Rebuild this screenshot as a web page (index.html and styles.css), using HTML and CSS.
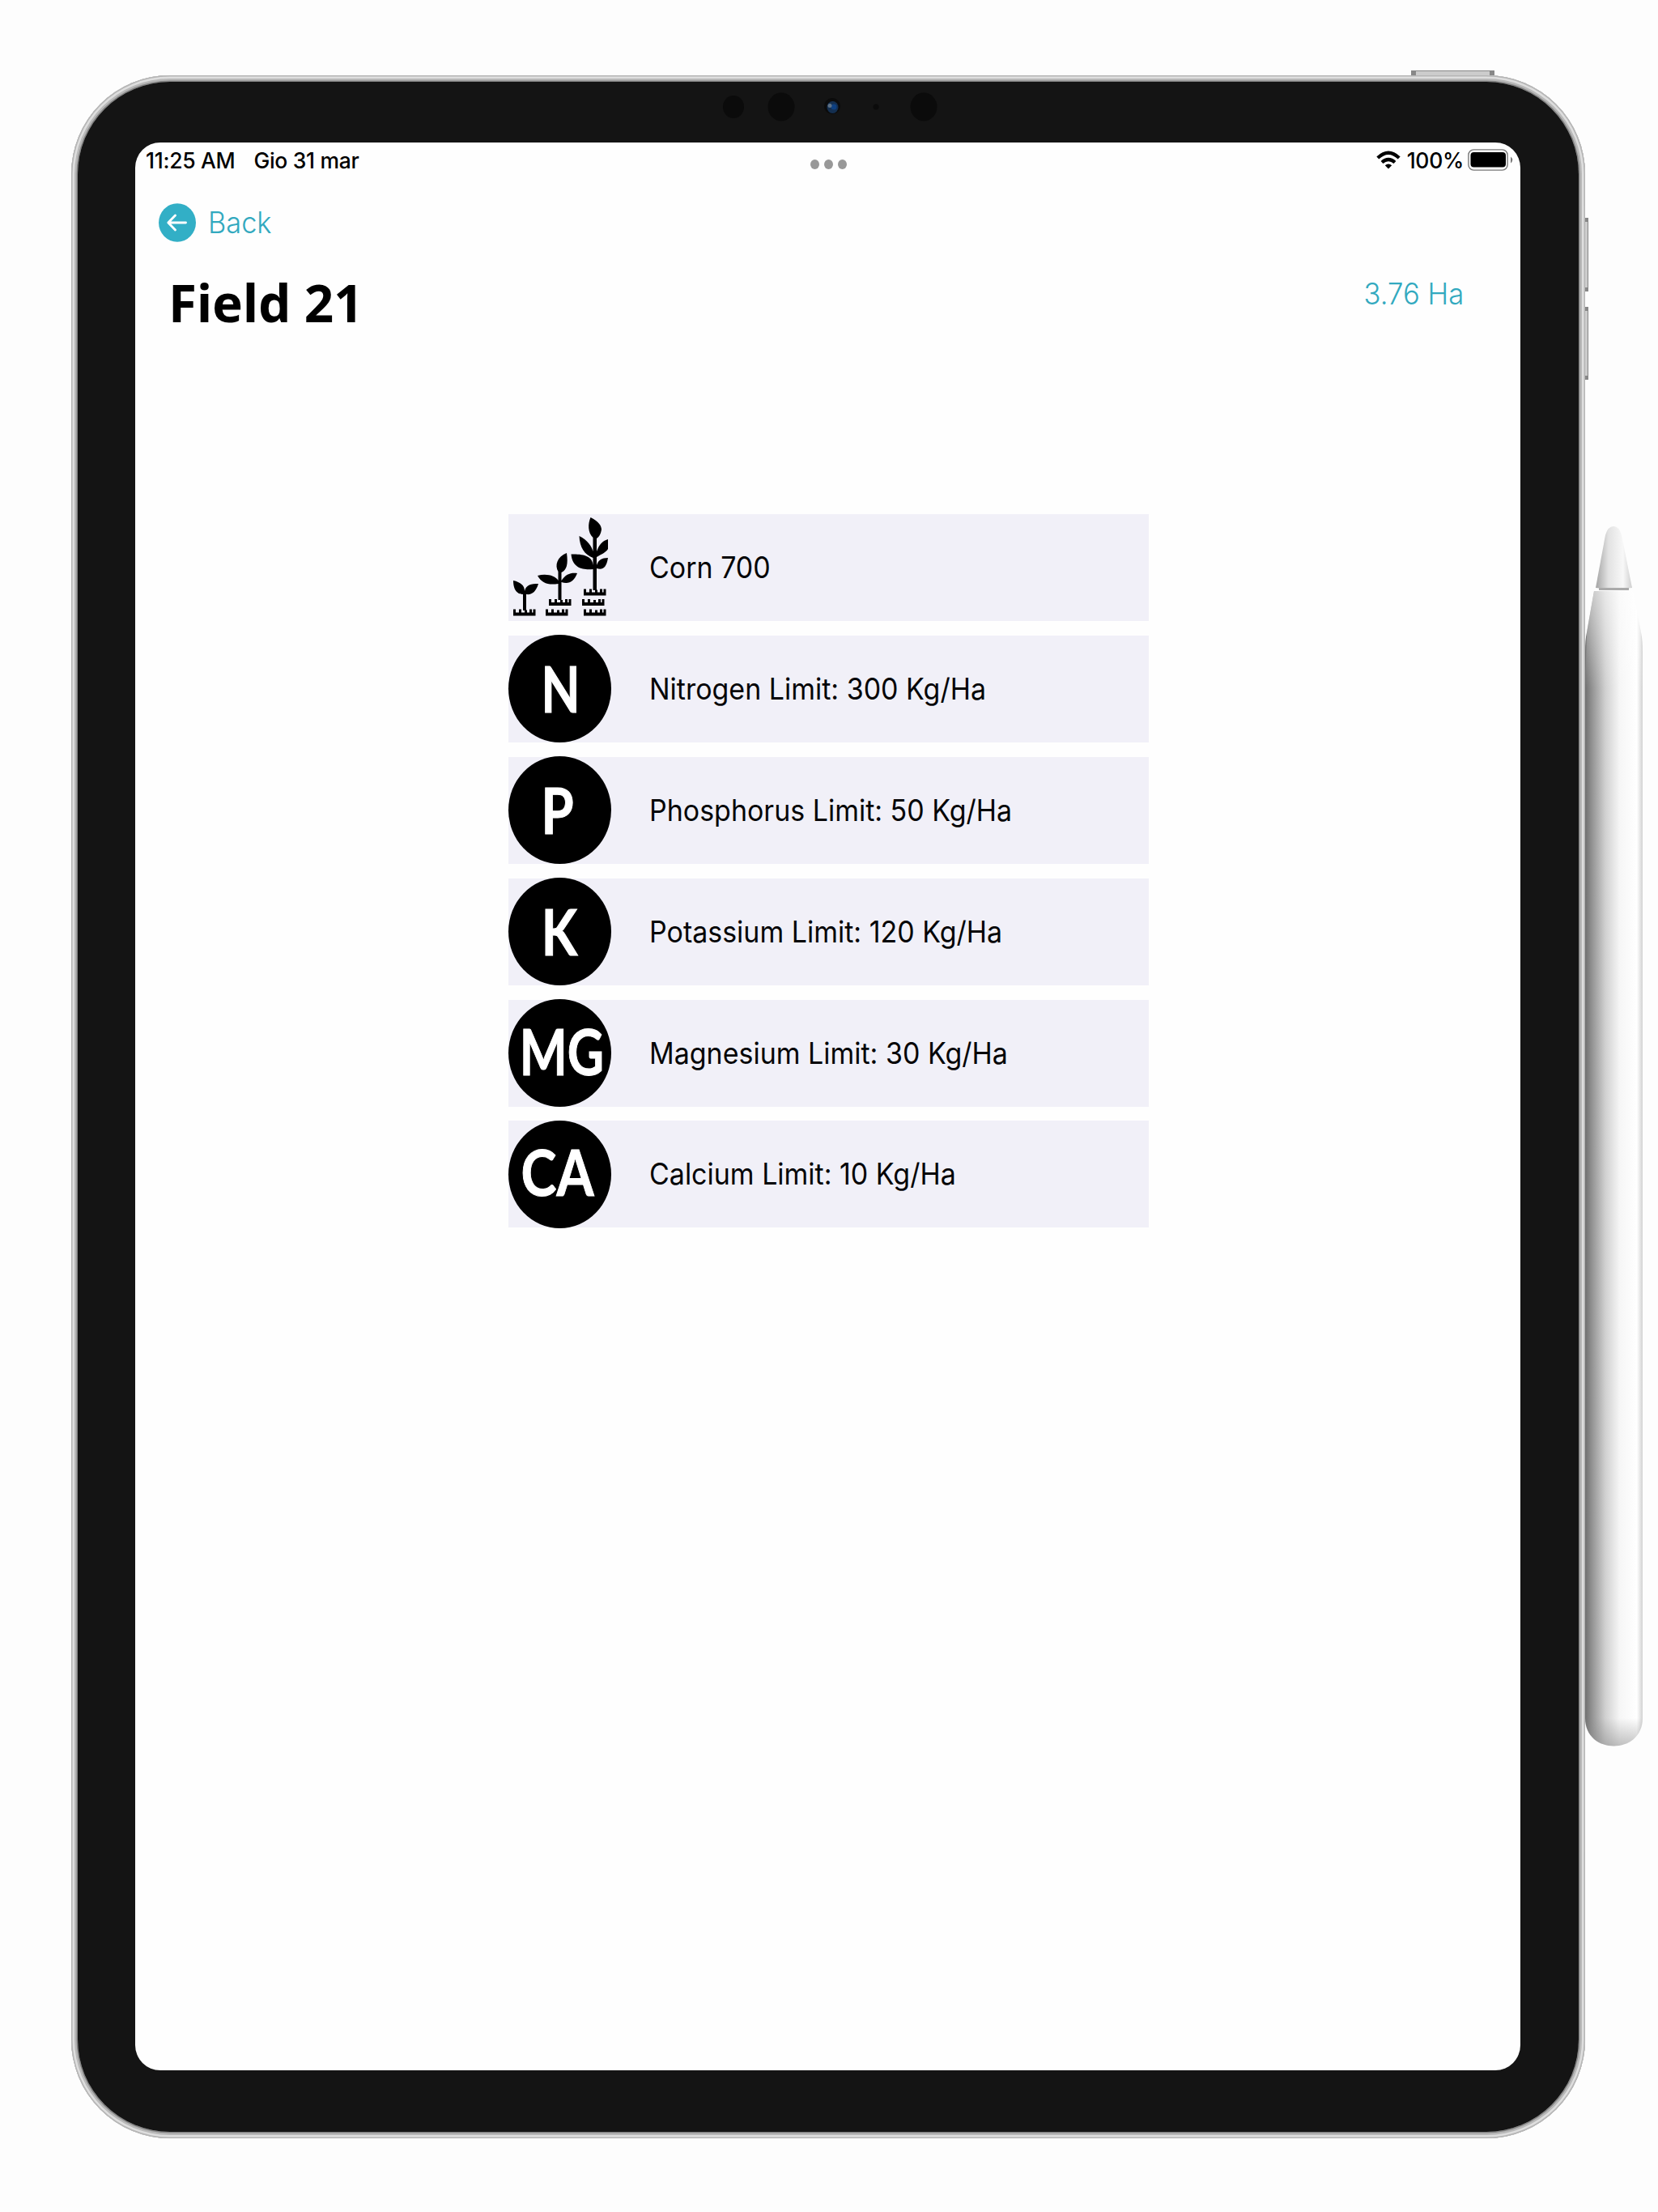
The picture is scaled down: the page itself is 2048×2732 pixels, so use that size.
FILE: index.html
```html
<!DOCTYPE html>
<html lang="en">
<head>
<meta charset="utf-8">
<title>Field 21</title>
<link rel="stylesheet" href="styles.css">
</head>
<body>
<div class="device">
  <i class="key key-top"></i><i class="key key-up"></i><i class="key key-down"></i>
  <div class="bezel">
    <svg class="sensors" width="280" height="44" viewBox="890 110 280 44">
      <g fill="#0b0b0b"><ellipse cx="906" cy="132" rx="13" ry="14"/><ellipse cx="965" cy="132" rx="16.500" ry="17.500"/><ellipse cx="1141" cy="132" rx="16.500" ry="17.500"/><circle cx="1028" cy="131" r="10"/><circle cx="1082" cy="132" r="3.500"/></g>
      <ellipse cx="1028.500" cy="132.500" rx="7" ry="7.500" fill="#142f50"/><circle cx="1030" cy="132" r="3.500" fill="#0d3f80"/><circle cx="1025" cy="130.500" r="2.500" fill="#5e7185"/>
    </svg>
    <main class="screen">
      <header class="status">
        <div class="clock"><span>11:25 AM</span><span>Gio 31 mar</span></div>
        <div class="more"><i></i><i></i><i></i></div>
        <div class="power">
          <svg width="30" height="24" viewBox="0 0 30 24" fill="none" stroke="#000" stroke-width="4.200"><path d="M1.800 9Q15-3.500 28.200 9"/><path d="M7 14.500Q15 7.500 23 14.500"/><path d="M10.800 18.300Q15 14.600 19.200 18.300L15 22.500Z" fill="#000" stroke="none"/></svg>
          <span>100%</span>
          <svg width="56" height="27" viewBox="0 0 56 27"><rect x=".9" y=".9" width="48.200" height="25.200" rx="6.500" fill="none" stroke="#777" stroke-width="1.400"/><rect x="3.500" y="4" width="43.500" height="18.500" rx="4"/><path d="M53 9.500Q57.500 13.500 53 17.500Z" fill="#777"/></svg>
        </div>
      </header>
      <a class="back">
        <svg width="46" height="48" viewBox="0 0 46 48"><ellipse cx="23" cy="24" rx="23" ry="23.700" fill="#32afc6"/><path d="M33.500 24H12.500M20.500 15L11.800 24L20.500 33" fill="none" stroke="#fff" stroke-width="2.900" stroke-linecap="round" stroke-linejoin="round"/></svg>
        <span>Back</span>
      </a>
      <div class="heading"><h1>Field 21</h1><span class="area">3.76 Ha</span></div>
      <ul class="list">
        <li><svg class="plants" width="127" height="132" viewBox="0 0 127 132">
          <defs><path id="soil" d="M0 0H3V4H7V0H10V4H14V1H17V4H20V0H23V4H24.500V0H27.500V8H0Z"/></defs>
          <use href="#soil" x="6" y="117.500"/><use href="#soil" x="46" y="117.500"/><use href="#soil" x="50" y="105"/><use href="#soil" x="91" y="105"/><use href="#soil" x="93" y="92.500"/><use href="#soil" x="93" y="117.500"/>
          <path d="M18 119V99C13 99 6 96 6 82C15 84 20 88 20 95C22 87 28 86 37 86C34 96 29 100 22 99V119ZM61.500 106V86C49 88 41 85 36 76C47 73 58 76 61.500 82V71C57 63 60 53 72 48C74 62 72 69 65.500 72V82C71 74 77 72 85 73C81 83 75 87 65.500 84V106ZM104.500 94V68C94 69 79 68 77.500 49.500C93 49 104 52 104.500 63V54C94 50 88 41 87.500 27C98 32 103 40 104.500 46V29C98 23 98 12 101.500 4C112 9 115 15 115 19C114 25 112 28 109 30V46C112 38 116 33 123 31V43C120 48 115 49 109 53V63C111 57 115 54 123 54C121 67 116 69 109 67V94Z"/>
        </svg><span>Corn 700</span></li>
        <li><b class="n"><i>N</i></b><span>Nitrogen Limit: 300 Kg/Ha</span></li>
        <li><b class="p"><i>P</i></b><span>Phosphorus Limit: 50 Kg/Ha</span></li>
        <li><b class="k"><i>K</i></b><span>Potassium Limit: 120 Kg/Ha</span></li>
        <li><b class="mg"><i>MG</i></b><span>Magnesium Limit: 30 Kg/Ha</span></li>
        <li><b class="ca"><i>CA</i></b><span>Calcium Limit: 10 Kg/Ha</span></li>
      </ul>
    </main>
  </div>
  <svg class="pencil" width="74" height="1508" viewBox="0 0 74 1508">
    <defs>
      <linearGradient id="body"><stop offset="0" stop-color="#707070"/><stop offset=".12" stop-color="#939393"/><stop offset=".35" stop-color="#d0d0d0"/><stop offset=".6" stop-color="#f6f6f6"/><stop offset=".9" stop-color="#fff"/><stop offset="1" stop-color="#d2d2d2"/></linearGradient>
      <linearGradient id="tip"><stop offset="0" stop-color="#a4a4a4"/><stop offset=".35" stop-color="#e2e2e2"/><stop offset=".75" stop-color="#f8f8f8"/><stop offset="1" stop-color="#cfcfcf"/></linearGradient>
      <linearGradient id="shine" x2="0" y2="1"><stop offset="0" stop-color="#fff" stop-opacity=".5"/><stop offset="1" stop-color="#fff" stop-opacity="0"/></linearGradient>
      <linearGradient id="base" x2="0" y2="1"><stop offset="0" stop-color="#888" stop-opacity="0"/><stop offset="1" stop-color="#888" stop-opacity=".5"/></linearGradient>
    </defs>
    <path d="M14 76L26 11Q29 0 36 0Q43 0 46 11L59 76Q36 79 14 76Z" fill="url(#tip)"/>
    <path d="M18 76H55V79H18Z" fill="#aaa"/>
    <path d="M12 80H60L70 131Q72 140 72 155V1472C72 1518 1 1518 1 1472V155Q1 140 3 131Z" fill="url(#body)"/>
    <path d="M12 80H60L70 131L72 200H1L3 131Z" fill="url(#shine)"/>
    <path d="M1 1472C1 1518 72 1518 72 1472Z" fill="url(#base)"/>
  </svg>
</div>
</body>
</html>
```
FILE: styles.css
```css
* { box-sizing: border-box; margin: 0; padding: 0; }
body { width: 2048px; height: 2732px; padding: 93px 0 0 88px; background: #fdfdfd; font-family: Inter, "Liberation Sans", sans-serif; color: #050507; overflow: hidden; }
i, b { font-style: normal; }
.device { position: relative; width: 1870px; height: 2548px; padding: 8px; border-radius: 122px; background: #d2d2d2; box-shadow: inset 0 0 0 1.500px #b5b5b5, inset 0 0 0 4px #dedede, inset 0 0 0 6.500px #b8b8b8, inset 0 0 0 8px #858585; }
.bezel { position: relative; height: 2532px; padding: 75px 71px 76px; border-radius: 114px; background: #141414; }
.sensors { position: absolute; left: 794px; top: 9px; }
.screen { display: flex; flex-direction: column; height: 2381px; width: 1711px; border-radius: 31px; background: #fefefe; }
.key { position: absolute; background: #ccc; border: 1px solid #888; }
.key-top { left: 1655px; top: -6px; width: 103px; height: 6px; border-width: 1px 6px 0; }
.key-up { left: 1870px; top: 176px; width: 4px; height: 91px; border-width: 5px 1px 5px 0; }
.key-down { left: 1870px; top: 286px; width: 4px; height: 90px; border-width: 5px 1px 5px 0; }
.pencil { position: absolute; left: 1869px; top: 557px; }
.status { display: grid; grid-template-columns: 1fr auto 1fr; align-items: center; height: 43px; padding: 0 9px 0 13px; font-size: 26.500px; font-weight: 450; letter-spacing: -.3px; color: #000; white-space: nowrap; }
.clock { display: flex; gap: 23px; }
.more { display: flex; gap: 6px; padding-top: 11px; margin-right: 3px; }
.more i { width: 11px; height: 12px; border-radius: 50%; background: #989898; }
.power { display: flex; justify-content: flex-end; align-items: center; }
.power span { margin: 0 5px 0 8px; }
.back { display: flex; align-items: center; gap: 15px; height: 48px; margin: 32px 0 0 29px; font-size: 36.500px; font-weight: 330; color: #32a9bf; }
.back span { transform: scaleX(.94); transform-origin: left; }
.heading { display: flex; justify-content: space-between; align-items: flex-start; height: 100px; margin: 29px 70px 0 41px; }
h1 { font: 700 65px/90px "Noto Sans", sans-serif; color: #000; white-space: nowrap; transform: scaleX(.98); transform-origin: left; }
.area { font-size: 36.500px; line-height: 44px; margin-top: 13px; font-weight: 330; color: #32a9bf; transform: scaleX(.95); transform-origin: right; }
.list { display: flex; flex-direction: column; gap: 17.900px; margin: 207px 0 0 461px; width: 791px; list-style: none; }
.list li { display: flex; align-items: center; height: 132px; background: #f1f0f8; }
.list span { margin-left: 47px; font-size: 36.300px; white-space: nowrap; transform: scaleX(.936); transform-origin: left; }
.list svg, .list b { flex: none; width: 127px; }
.list b { display: flex; justify-content: center; align-items: center; height: 133px; border-radius: 50%; background: #000; color: #fff; }
.list b i { font: 700 79px/80px Lato, sans-serif; -webkit-text-stroke: 1px #fff; }
.n i { transform: translate(1px, -1px) scaleX(.79); }
.p i { transform: translate(-3px, -1px) scaleX(.82); }
.k i { transform: translateY(-1px) scaleX(.82); }
.mg i { transform: translate(2px, -3px) scaleX(.79); }
.ca i { transform: translate(-3px, -3px) scaleX(.84); }
```
